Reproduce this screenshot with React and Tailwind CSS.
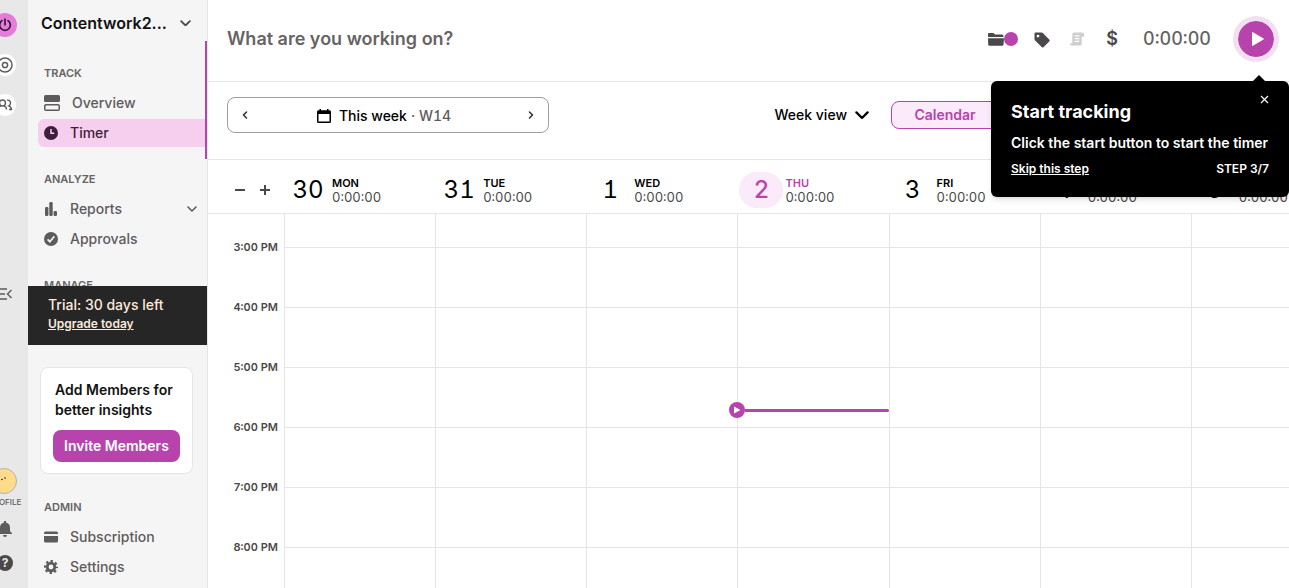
import { useState } from 'react';

const DAYS = [
    { num: '30', name: 'MON' },
    { num: '31', name: 'TUE' },
    { num: '1', name: 'WED' },
    { num: '2', name: 'THU', today: true },
    { num: '3', name: 'FRI' },
    { num: '4', name: 'SAT' },
    { num: '5', name: 'SUN' }
];

const HOURS = ['3:00 PM', '4:00 PM', '5:00 PM', '6:00 PM', '7:00 PM', '8:00 PM'];

function Chevron({ className, d = 'M1 1l4 4 4-4', box = '0 0 10 6' }) {
    return (
        <svg viewBox={box} className={className} fill="none" stroke="currentColor" strokeWidth="1.6" strokeLinecap="round" strokeLinejoin="round">
            <path d={d} />
        </svg>
    );
}

const icons = {
    overview: (
        <svg viewBox="0 0 16 16" className="w-4 h-4">
            <rect x="0" y="0" width="16" height="7" rx="1.5" fill="currentColor" />
            <rect x="0.75" y="9.75" width="14.5" height="5.5" rx="1.2" fill="none" stroke="currentColor" strokeWidth="1.5" />
        </svg>
    ),
    timer: (
        <svg viewBox="0 0 14 14" className="w-3.5 h-3.5">
            <circle cx="7" cy="7" r="7" fill="currentColor" />
            <path d="M7 3v4.3h3.2" fill="none" stroke="#f7cfee" strokeWidth="1.5" />
        </svg>
    ),
    reports: (
        <svg viewBox="0 0 14 14" className="w-3.5 h-3.5" fill="currentColor">
            <rect x="1" y="5" width="3.4" height="9" rx="1.2" />
            <rect x="5.3" y="0" width="3.4" height="14" rx="1.2" />
            <rect x="9.6" y="9" width="3.4" height="5" rx="1.2" />
        </svg>
    ),
    approvals: (
        <svg viewBox="0 0 14 14" className="w-3.5 h-3.5">
            <circle cx="7" cy="7" r="7" fill="currentColor" />
            <path d="M3.6 7.4l2.2 2.3 4.5-5.3" fill="none" stroke="#f5f5f5" strokeWidth="1.7" />
        </svg>
    ),
    subscription: (
        <svg viewBox="0 0 14 12" className="w-3.5 h-3" fill="currentColor">
            <path d="M1.5 0.5h11a1.5 1.5 0 0 1 1.5 1.5v1H0V2A1.5 1.5 0 0 1 1.5 0.5z" />
            <path d="M0 5h14v5a1.5 1.5 0 0 1-1.5 1.5h-11A1.5 1.5 0 0 1 0 10z" />
        </svg>
    ),
    settings: (
        <svg viewBox="0 0 14 14" className="w-3.5 h-3.5" fill="none" stroke="currentColor">
            <circle cx="7" cy="7" r="3.8" strokeWidth="2.8" />
            <circle cx="7" cy="7" r="5.9" strokeWidth="2.2" strokeDasharray="2.4 2.234" strokeDashoffset="1.2" />
        </svg>
    )
};

function NavItem({ icon, label, active, wide, expandable }) {
    return (
        <li>
            <a
                href="#"
                className={`flex items-center h-7 pl-1.5 pr-2.5 rounded-l-md text-sm font-medium ${
                    active ? 'bg-[#f7cfee] text-[#3f1d3c]' : 'text-[#5e5b5d]'
                }`}
            >
                <span className={wide ? 'w-7' : 'w-[26px]'}>{icons[icon]}</span>
                {label}
                {expandable && <Chevron className="w-2.5 ml-auto" />}
            </a>
        </li>
    );
}

function NavHeading({ children }) {
    return <h2 className="h-7 mb-0.5 pl-1.5 flex items-center text-[11px] font-semibold text-[#666365]">{children}</h2>;
}

function Rail() {
    return (
        <aside className="w-7 shrink-0 bg-[#e8e8e8] flex justify-end overflow-hidden text-[#5e5b5d]">
            <div className="w-[46px] shrink-0 flex flex-col items-center pt-[13px]">
                <button aria-label="Track" className="w-6 h-6 rounded-full bg-[#e57cd8] text-[#2c1338] flex items-center justify-center">
                    <svg viewBox="0 0 14 14" className="w-3.5 h-3.5" fill="none" stroke="currentColor" strokeWidth="1.6" strokeLinecap="round">
                        <path d="M7 1v6M4 2.700a5.300 5.300 0 1 0 6 0" />
                    </svg>
                </button>
                <button aria-label="Plan" className="w-[22px] h-[22px] mt-[17px] rounded-full bg-white flex items-center justify-center">
                    <svg viewBox="0 0 16 16" className="w-4 h-4" fill="none" stroke="currentColor" strokeWidth="1.5">
                        <circle cx="8" cy="8" r="7" />
                        <circle cx="8" cy="8" r="2.600" />
                    </svg>
                </button>
                <button aria-label="Team" className="w-[22px] h-[22px] mt-[18px] rounded-full bg-white flex items-center justify-center">
                    <svg viewBox="0 0 16 12" className="w-4 h-3" fill="none" stroke="currentColor" strokeWidth="1.4">
                        <circle cx="5.500" cy="4" r="3" />
                        <path d="M1 10.500c0-2 1.500-3.200 3-3.400M7 7.100c1.500.3 2.500 1.400 2.500 3.400M10 1.200c4-.6 4.500 4.300 1.800 5.600 1.700.6 2.700 1.500 2.700 3.700H12" />
                    </svg>
                </button>
                <button aria-label="Collapse menu" className="mt-[170px] h-4">
                    <svg viewBox="0 0 14 12" className="w-3.5 h-3" fill="none" stroke="currentColor" strokeWidth="1.4">
                        <path d="M0 1h9M0 6h7M0 11h9M13.500 2L9.500 6l4 4" />
                    </svg>
                </button>
                <div className="mt-auto flex flex-col items-center pb-[17px]">
                    <div className="w-[26px] h-[26px] mr-px rounded-full bg-[#ffdb8b] border border-[#b5b0b4]">
                        <svg viewBox="0 0 24 24" fill="#2c1338">
                            <circle cx="10" cy="10.500" r="0.800" />
                            <circle cx="13" cy="9" r="0.800" />
                        </svg>
                    </div>
                    <span className="mt-0.5 text-[8px] leading-3 font-medium">PROFILE</span>
                    <button aria-label="Notifications" className="mt-[13px] h-4">
                        <svg viewBox="0 0 14 16" className="w-3.5 h-4" fill="currentColor">
                            <path d="M6 0h2v1.500c2.500.5 4 2.500 4 5V10l2 2.200V13H0v-.8L2 10V6.500c0-2.500 1.500-4.500 4-5zM5 14h4a2 2 0 0 1-4 0z" />
                        </svg>
                    </button>
                    <button aria-label="Help" className="mt-[18px] w-4 h-4 rounded-full bg-[#4a484a] text-[#e8e8e8] text-xs leading-4 font-bold">?</button>
                </div>
            </div>
        </aside>
    );
}

function Sidebar() {
    return (
        <nav className="relative w-[180px] shrink-0 bg-[#f5f5f5] border-r border-[#e6e5e6] overflow-hidden">
            <button className="flex items-center h-[46px] w-full pl-[13px] pr-4 mb-[13px] text-base font-semibold text-[#121212]">
                Contentwork2...
                <Chevron className="w-[11px] ml-auto text-[#4a484a]" />
            </button>

            {/* Scroll position of the menu */}
            <div className="absolute right-0 top-[41px] w-0.5 h-[118px] bg-[#b744ac]" />

            <section className="pl-2.5 mb-[18px]">
                <NavHeading>TRACK</NavHeading>
                <ul className="flex flex-col gap-0.5 mr-0.5">
                    <NavItem icon="overview" label="Overview" wide />
                    <NavItem icon="timer" label="Timer" active />
                </ul>
            </section>
            <section className="pl-2.5 mb-[18px]">
                <NavHeading>ANALYZE</NavHeading>
                <ul className="flex flex-col gap-0.5">
                    <NavItem icon="reports" label="Reports" expandable />
                    <NavItem icon="approvals" label="Approvals" />
                </ul>
            </section>
            <section className="pl-2.5">
                <NavHeading>MANAGE</NavHeading>
            </section>

            {/* Trial banner covers the rest of the menu */}
            <div className="relative -mt-[15px] h-[59px] pl-5 pt-2.5 bg-[#262626] text-[#fce9dc]">
                <p className="text-sm leading-[18px] font-medium">Trial: 30 days left</p>
                <a href="#" className="block text-xs leading-5 font-semibold underline">Upgrade today</a>
            </div>

            <div className="mt-[22px] ml-3 mr-3.5 mb-[19px] px-3 pt-3 pb-[11px] bg-white border border-[#e6e5e6] rounded-lg">
                <p className="pl-0.5 text-sm leading-5 font-semibold text-[#121212] whitespace-nowrap">
                    Add Members for<br />better insights
                </p>
                <button className="mt-2.5 w-full h-8 rounded-lg bg-[#b744ac] text-white text-sm font-semibold whitespace-nowrap">
                    Invite Members
                </button>
            </div>

            <section className="pl-2.5">
                <NavHeading>ADMIN</NavHeading>
                <ul className="flex flex-col gap-0.5">
                    <NavItem icon="subscription" label="Subscription" />
                    <NavItem icon="settings" label="Settings" />
                </ul>
            </section>
        </nav>
    );
}

function TimerBar() {
    const [description, setDescription] = useState('');

    return (
        <header className="flex items-center h-[82px] pb-[3px] pl-[19px] pr-2.5 border-b border-[#e6e5e6] text-[#4a484a]">
            <input
                type="text"
                aria-label="Time entry description"
                placeholder="What are you working on?"
                value={description}
                onChange={(e) => setDescription(e.target.value)}
                className="flex-1 min-w-0 text-lg font-semibold placeholder:text-[#666365] focus:outline-none"
            />
            <button aria-label="Project" className="flex items-center">
                <svg viewBox="0 0 16 13" className="w-4 h-[13px]" fill="currentColor">
                    <path d="M1 0h4.500l1.500 1.500h7a1.500 1.500 0 0 1 1.500 1.500v1H0V1a1 1 0 0 1 1-1zM0 5.200h16l-.5 6.300a1.300 1.300 0 0 1-1.300 1.200H1.500A1.300 1.300 0 0 1 .2 11.500z" />
                </svg>
                <span className="w-3.5 h-3.5 rounded-full bg-[#b744ac]" />
            </button>
            <button aria-label="Tags" className="ml-4 pt-0.5">
                <svg viewBox="0 0 16 16" className="w-4 h-4" fill="currentColor">
                    <path fillRule="evenodd" d="M1.500 0.500h6a2 2 0 0 1 1.400.6l6.300 6.300a1.400 1.400 0 0 1 0 2L9.700 15a1.400 1.400 0 0 1-2 0L1.100 8.500A2 2 0 0 1 .5 7V1.500a1 1 0 0 1 1-1zM4 2.700a1.400 1.400 0 1 0 0 2.800 1.400 1.400 0 0 0 0-2.800z" />
                </svg>
            </button>
            <button aria-label="Invoice" className="ml-5 text-[#cfcecf]">
                <svg viewBox="0 0 15 15" className="w-3.5 h-3.5" fill="currentColor">
                    <path fillRule="evenodd" d="M4.500 0.500H13a2 2 0 0 1 2 2V5h-2.500v7.500a2 2 0 0 1-2 2H2a2 2 0 0 1-2-2V12h2.500V2.500a2 2 0 0 1 2-2zM5 3.500v1.200h5V3.500zM5 6.500v1.200h5V6.500zM5 9.500v1.200h5V9.500z" />
                </svg>
            </button>
            <button aria-label="Billable" className="ml-[22px] w-3 text-lg font-semibold">$</button>
            <span className="ml-[25px] text-lg font-medium tabular-nums text-[#666365]">0:00:00</span>
            <button
                aria-label="Start timer"
                className="ml-[22px] w-[46px] h-[46px] rounded-full bg-[#b744ac] border-5 border-[#f3dff0] bg-clip-padding text-white flex items-center justify-center"
            >
                <svg viewBox="0 0 14 16" className="w-3.5 h-4 ml-1" fill="currentColor">
                    <path d="M1.500 1.500L12.500 8l-11 6.500z" stroke="currentColor" strokeWidth="1" strokeLinejoin="round" />
                </svg>
            </button>
        </header>
    );
}

function Toolbar() {
    return (
        <div className="flex items-start h-[78px] pt-[15px] pl-[19px] border-b border-[#e6e5e6]">
            <div className="flex items-center justify-between w-[322px] h-9 pl-3.5 pr-3.5 border border-[#a09d9f] rounded-lg">
                <button aria-label="Previous week">
                    <Chevron box="0 0 6 10" d="M4.500 2L1.500 5l3 3" className="w-1.5 h-2.5 text-[#333]" />
                </button>
                <button className="flex items-center pr-2 pt-0.5 text-sm font-medium text-black">
                    <svg viewBox="0 0 14 14" className="w-3.5 h-3.5 mr-2">
                        <path fill="currentColor" fillRule="evenodd" d="M2.500 0h1.500v1.300h6V0h1.500v1.300h1A1.500 1.500 0 0 1 14 2.800v9.700a1.500 1.500 0 0 1-1.500 1.500h-11A1.500 1.500 0 0 1 0 12.500V2.800a1.500 1.500 0 0 1 1.500-1.500h1zM1.500 5v7.500h11V5z" />
                    </svg>
                    This week
                    <span className="ml-1 [font-feature-settings:'tnum','cv01'] text-[#5e5b5d]">·&nbsp;W14</span>
                </button>
                <button aria-label="Next week">
                    <Chevron box="0 0 6 10" d="M1.500 2l3 3-3 3" className="w-1.5 h-2.5 text-[#333]" />
                </button>
            </div>
            <button className="ml-auto flex items-center h-9 text-sm font-medium text-black">
                Week view
                <Chevron className="w-3.5 ml-2" />
            </button>
            <div className="w-[378px] ml-[22px] mr-5 pt-1">
                <button className="w-[126px] h-7 pr-[18px] rounded-l-lg border border-[#b744ac] bg-[#faeafa] text-[#b744ac] text-sm font-semibold">
                    Calendar
                </button>
            </div>
        </div>
    );
}

function Calendar() {
    return (
        <section className="flex-1 min-h-0 flex flex-col w-[calc(100%+53px)]">
            {/* Day headings */}
            <div className="flex h-[54px] shrink-0 pt-1.5 border-b border-[#e6e5e6]">
                <div className="w-[76px] shrink-0 flex items-center gap-[13px] pl-[26px] text-[#4a484a]">
                    <button aria-label="Zoom out">
                        <svg viewBox="0 0 12 12" className="w-3 h-3" stroke="currentColor" strokeWidth="2"><path d="M1 6h10" /></svg>
                    </button>
                    <button aria-label="Zoom in">
                        <svg viewBox="0 0 12 12" className="w-3 h-3" stroke="currentColor" strokeWidth="2"><path d="M1 6h10M6 1v10" /></svg>
                    </button>
                </div>
                {DAYS.map(day => (
                    <div key={day.name} className="flex-1 min-w-0 flex items-center gap-0.5 pl-0.5 [font-feature-settings:'tnum','cv01']">
                        <span
                            className={`w-11 h-9 rounded-full flex items-center justify-center text-2xl ${
                                day.today ? 'bg-[#faeafa] text-[#b744ac] font-medium' : 'text-black'
                            }`}
                        >
                            {day.num}
                        </span>
                        <div>
                            <p className={`text-[11px] leading-[14px] font-semibold ${day.today ? 'text-[#b744ac]' : 'text-black'}`}>{day.name}</p>
                            <p className="text-[13px] leading-[14px] text-[#4a484a]">0:00:00</p>
                        </div>
                    </div>
                ))}
            </div>

            {/* Hour grid */}
            <div className="flex-1 min-h-0 flex overflow-hidden">
                <div className="w-[76px] shrink-0 pt-[3px] pr-1.5">
                    {HOURS.map(hour => (
                        <div key={hour} className="h-15 flex items-center justify-end text-[11px] font-semibold text-[#4a484a] tabular-nums">
                            {hour}
                        </div>
                    ))}
                </div>
                {DAYS.map(day => (
                    <div key={day.name} className="relative flex-1 border-l border-[#e6e5e6]">
                        <div className="h-[34px] border-b border-[#e6e5e6]" />
                        {HOURS.map(hour => (
                            <div key={hour} className="h-15 border-b border-[#e6e5e6]" />
                        ))}
                        {day.today && (
                            <div className="absolute -left-[9px] right-0 top-[188px] flex items-center">
                                <span className="w-4 h-4 rounded-full bg-[#b744ac] text-white flex items-center justify-center">
                                    <svg viewBox="0 0 8 8" className="w-2 h-2" fill="currentColor"><path d="M1 0.500L7.500 4 1 7.500z" /></svg>
                                </span>
                                <span className="flex-1 h-[3px] rounded-r-full bg-[#b744ac]" />
                            </div>
                        )}
                    </div>
                ))}
            </div>
        </section>
    );
}

function StartTip({ onClose }) {
    return (
        <div role="dialog" aria-labelledby="tip-title" className="absolute right-0 top-[81px] w-[298px] h-[116px] px-5 pt-[19px] rounded-md bg-black text-white shadow-md">
            <svg viewBox="0 0 14 7" className="absolute right-[23px] -top-1.5 w-3.5 h-[7px]"><path d="M0 7l7-7 7 7z" /></svg>
            <button aria-label="Close" onClick={onClose} className="absolute right-5 top-3.5">
                <svg viewBox="0 0 9 9" className="w-[9px] h-[9px]" stroke="currentColor" strokeWidth="1.2"><path d="M1 1l7 7M8 1L1 8" /></svg>
            </button>
            <h3 id="tip-title" className="text-lg leading-6 font-bold">Start tracking</h3>
            <p className="mt-[9px] text-sm leading-5 font-semibold whitespace-nowrap">Click the start button to start the timer</p>
            <div className="mt-2 flex items-center justify-between text-xs leading-4 font-semibold">
                <a href="#" className="underline">Skip this step</a>
                <span>STEP 3/7</span>
            </div>
        </div>
    );
}

export default function App() {
    const [showTip, setShowTip] = useState(true);

    return (
        <div className="relative flex h-screen overflow-hidden bg-white font-['Inter',sans-serif]">
            <Rail />
            <Sidebar />
            <main className="flex-1 min-w-0 flex flex-col overflow-hidden">
                <TimerBar />
                <Toolbar />
                <Calendar />
            </main>
            {showTip && <StartTip onClose={() => setShowTip(false)} />}
        </div>
    );
}
